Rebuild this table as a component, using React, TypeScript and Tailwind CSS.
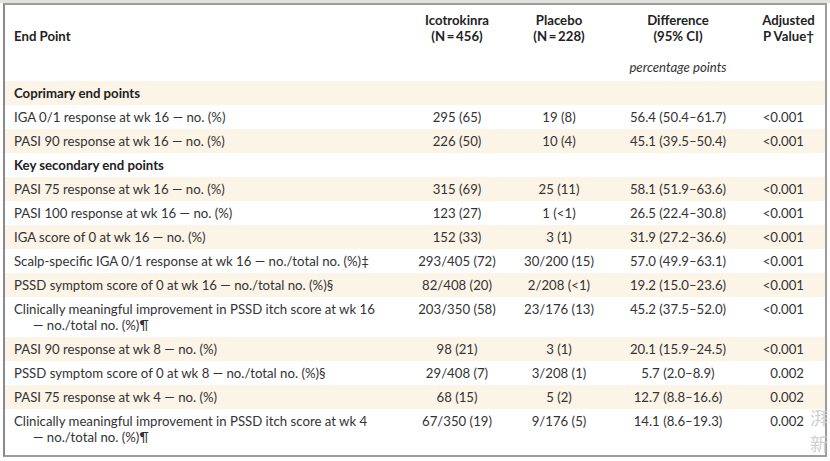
import React from "react"

type Row = {
  label: string
  mark?: string
  cont?: string
  ico?: string
  pla?: string
  diff?: string
  p?: string
  heading?: boolean
}

const rows: Row[] = [
  { label: "Coprimary end points", heading: true },
  { label: "IGA 0/1 response at wk 16 — no. (%)", ico: "295 (65)", pla: "19 (8)", diff: "56.4 (50.4–61.7)", p: "<0.001" },
  { label: "PASI 90 response at wk 16 — no. (%)", ico: "226 (50)", pla: "10 (4)", diff: "45.1 (39.5–50.4)", p: "<0.001" },
  { label: "Key secondary end points", heading: true },
  { label: "PASI 75 response at wk 16 — no. (%)", ico: "315 (69)", pla: "25 (11)", diff: "58.1 (51.9–63.6)", p: "<0.001" },
  { label: "PASI 100 response at wk 16 — no. (%)", ico: "123 (27)", pla: "1 (<1)", diff: "26.5 (22.4–30.8)", p: "<0.001" },
  { label: "IGA score of 0 at wk 16 — no. (%)", ico: "152 (33)", pla: "3 (1)", diff: "31.9 (27.2–36.6)", p: "<0.001" },
  { label: "Scalp-specific IGA 0/1 response at wk 16 — no./total no. (%)", mark: "‡", ico: "293/405 (72)", pla: "30/200 (15)", diff: "57.0 (49.9–63.1)", p: "<0.001" },
  { label: "PSSD symptom score of 0 at wk 16 — no./total no. (%)", mark: "§", ico: "82/408 (20)", pla: "2/208 (<1)", diff: "19.2 (15.0–23.6)", p: "<0.001" },
  { label: "Clinically meaningful improvement in PSSD itch score at wk 16", cont: "— no./total no. (%)", mark: "¶", ico: "203/350 (58)", pla: "23/176 (13)", diff: "45.2 (37.5–52.0)", p: "<0.001" },
  { label: "PASI 90 response at wk 8 — no. (%)", ico: "98 (21)", pla: "3 (1)", diff: "20.1 (15.9–24.5)", p: "<0.001" },
  { label: "PSSD symptom score of 0 at wk 8 — no./total no. (%)", mark: "§", ico: "29/408 (7)", pla: "3/208 (1)", diff: "5.7 (2.0–8.9)", p: "0.002" },
  { label: "PASI 75 response at wk 4 — no. (%)", ico: "68 (15)", pla: "5 (2)", diff: "12.7 (8.8–16.6)", p: "0.002" },
  { label: "Clinically meaningful improvement in PSSD itch score at wk 4", cont: "— no./total no. (%)", mark: "¶", ico: "67/350 (19)", pla: "9/176 (5)", diff: "14.1 (8.6–19.3)", p: "0.002" },
]

const cols = "grid grid-cols-[395px_114px_90px_148px_73px]"

export default function App() {
  return (
    <div
      className="relative w-[830px] h-[461px] overflow-hidden bg-white text-[13.2px] leading-4 text-[#333]"
      style={{ fontFamily: "Lato, 'Open Sans', sans-serif" }}
    >
      <div className="h-[3px] bg-[#e4e2dc]" />
      <div className="ml-[3px] w-[824px] h-[454px] border-2 border-[#9c9c9c] border-l-[#8a8a8a]">
        {/* Header */}
        <div className="pt-[7px] pb-[6px]">
          <div className={`${cols} items-end font-bold text-[#222]`}>
            <div className="pl-[9px]">End Point</div>
            <div className="text-center">Icotrokinra<br />(N{"\u2009=\u2009"}456)</div>
            <div className="text-center">Placebo<br />(N{"\u2009=\u2009"}228)</div>
            <div className="text-center">Difference<br />(95% CI)</div>
            <div className="text-center">Adjusted<br />P Value†</div>
          </div>
          <div className={`${cols} mt-[15px]`}>
            <div />
            <div />
            <div />
            <div className="text-center italic">percentage points</div>
            <div />
          </div>
        </div>

        {/* Body */}
        {rows.map((r, i) => (
          <div key={i} className={`${cols} py-1 ${i % 2 === 0 ? "bg-[#fcf4e7]" : "bg-white"}`}>
            <div className={`pl-[9px] ${r.heading ? "font-bold text-[#222]" : ""}`}>
              {r.label}
              {!r.cont && r.mark}
              {r.cont && (
                <div className="pl-[19px]">
                  {r.cont}
                  {r.mark}
                </div>
              )}
            </div>
            <div className="text-center">{r.ico}</div>
            <div className="text-center">{r.pla}</div>
            <div className="text-center">{r.diff}</div>
            <div className="text-right pr-[21px]">{r.p}</div>
          </div>
        ))}
      </div>

      {/* watermark */}
      <div className="absolute left-[810px] top-[404px] text-[18px] leading-[26px] text-[#cfcfcf]" style={{ fontFamily: "'Noto Sans CJK SC', sans-serif" }}>
        湃<br />新
      </div>
    </div>
  )
}
